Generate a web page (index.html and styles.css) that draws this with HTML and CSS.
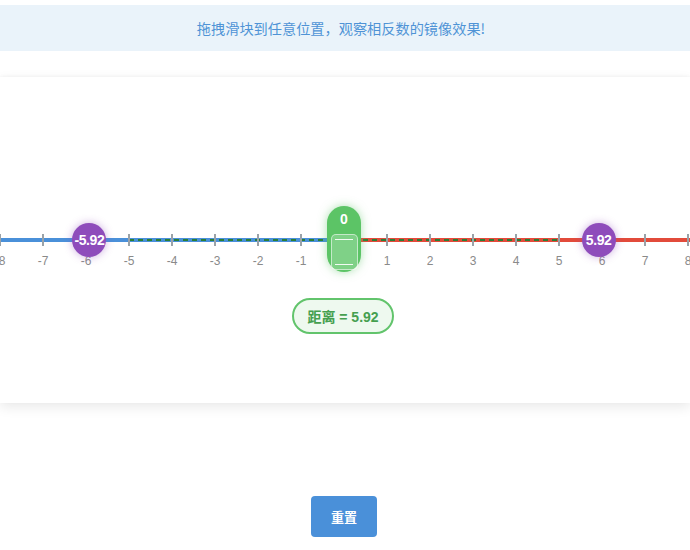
FILE: index.html
```html
<!DOCTYPE html>
<html lang="zh">
<head>
<meta charset="utf-8">
<link rel="stylesheet" href="styles.css">
</head>
<body>
<div class="page">
  <div class="info">拖拽滑块到任意位置，观察相反数的镜像效果!</div>
  <div class="card">
    <div class="axis">
      <div class="line line-neg"></div>
      <div class="line line-pos"></div>
      <div class="dash" style="left:calc(50% - 1px - 215px);width:430px"></div>
      <div class="tick" style="left:calc(50% - 1px - 344px)"><span>-8</span></div>
      <div class="tick" style="left:calc(50% - 1px - 301px)"><span>-7</span></div>
      <div class="tick" style="left:calc(50% - 1px - 258px)"><span>-6</span></div>
      <div class="tick" style="left:calc(50% - 1px - 215px)"><span>-5</span></div>
      <div class="tick" style="left:calc(50% - 1px - 172px)"><span>-4</span></div>
      <div class="tick" style="left:calc(50% - 1px - 129px)"><span>-3</span></div>
      <div class="tick" style="left:calc(50% - 1px - 86px)"><span>-2</span></div>
      <div class="tick" style="left:calc(50% - 1px - 43px)"><span>-1</span></div>
      <div class="tick" style="left:calc(50% - 1px + 43px)"><span>1</span></div>
      <div class="tick" style="left:calc(50% - 1px + 86px)"><span>2</span></div>
      <div class="tick" style="left:calc(50% - 1px + 129px)"><span>3</span></div>
      <div class="tick" style="left:calc(50% - 1px + 172px)"><span>4</span></div>
      <div class="tick" style="left:calc(50% - 1px + 215px)"><span>5</span></div>
      <div class="tick" style="left:calc(50% - 1px + 258px)"><span>6</span></div>
      <div class="tick" style="left:calc(50% - 1px + 301px)"><span>7</span></div>
      <div class="tick" style="left:calc(50% - 1px + 344px)"><span>8</span></div>
      <div class="point" style="left:calc(50% - 1px - 254.6px)">-5.92</div>
      <div class="point" style="left:calc(50% - 1px + 254.6px)">5.92</div>
      <div class="handle" style="left:calc(50% - 1px)">
        <span class="handle-val">0</span>
        <div class="grip"><i></i><i></i></div>
      </div>
    </div>
    <div class="distance">距离 = 5.92</div>
  </div>
  <div class="actions">
    <button class="reset">重置</button>
  </div>
</div>
</body>
</html>
```

FILE: styles.css
```css
html, body {
  margin: 0;
  padding: 0;
  background: #ffffff;
  overflow: hidden;
}
body {
  font-family: "Liberation Sans", Arial, "Noto Sans CJK SC", sans-serif;
}
.page {
  padding-top: 5px;
}
.info {
  height: 46px;
  display: flex;
  align-items: center;
  justify-content: center;
  background: #eaf3fa;
  color: #4f93d6;
  font-size: 14.2px;
  font-family: "Noto Sans CJK SC", sans-serif;
  padding-right: 8px;
}
.card {
  margin-top: 26px;
  height: 326px;
  box-sizing: border-box;
  padding-top: 133px;
  background: #fff;
  box-shadow: 0 4px 12px rgba(0, 0, 0, 0.09), 0 -1px 3px rgba(0, 0, 0, 0.03);
  display: flex;
  flex-direction: column;
  align-items: center;
}
.axis {
  position: relative;
  width: 100%;
  height: 60px;
}
.line {
  position: absolute;
  top: 28px;
  height: 4px;
}
.line-neg {
  left: 0;
  width: calc(50% - 1px);
  background: #4a90d9;
}
.line-pos {
  left: calc(50% - 1px);
  right: 0;
  background: #e24b3b;
}
.dash {
  position: absolute;
  top: 29px;
  height: 2px;
  background: repeating-linear-gradient(90deg, #2a7f36 0 5px, transparent 5px 9px);
}
.tick {
  position: absolute;
  top: 24px;
  width: 2px;
  height: 12px;
  margin-left: -1px;
  background: #9aa2a8;
}
.tick span {
  position: absolute;
  top: 20px;
  left: 1px;
  transform: translateX(-50%);
  font-size: 12px;
  color: #8a8a8a;
  white-space: nowrap;
}
.point {
  position: absolute;
  top: 13px;
  width: 34px;
  height: 34px;
  margin-left: -17px;
  border-radius: 50%;
  background: #8e4cbb;
  color: #fff;
  font-weight: bold;
  font-size: 14px;
  display: flex;
  align-items: center;
  justify-content: center;
  box-shadow: 0 0 8px rgba(142, 76, 187, 0.45);
  letter-spacing: -0.4px;
  white-space: nowrap;
}
.handle {
  position: absolute;
  top: -4px;
  width: 34px;
  height: 66px;
  margin-left: -17px;
  border-radius: 17px;
  background: #5cc466;
  box-shadow: 0 0 10px rgba(92, 196, 102, 0.5);
  display: flex;
  flex-direction: column;
  align-items: center;
}
.handle-val {
  margin-top: 5px;
  color: #fff;
  font-weight: bold;
  font-size: 14px;
  line-height: 16px;
}
.grip {
  margin-top: 7px;
  width: 27px;
  height: 36px;
  box-sizing: border-box;
  border: 1px solid rgba(255, 255, 255, 0.55);
  border-radius: 5px;
  background: rgba(255, 255, 255, 0.22);
  display: flex;
  flex-direction: column;
  justify-content: space-between;
  align-items: center;
  padding: 4px 0;
}
.grip i {
  display: block;
  width: 18px;
  height: 1px;
  background: rgba(255, 255, 255, 0.9);
}
.distance {
  margin-top: 28px;
  height: 36px;
  box-sizing: border-box;
  padding: 0 13px;
  border: 2px solid #62c46c;
  border-radius: 18px;
  background: #eef9ef;
  color: #45a04f;
  font-weight: bold;
  font-size: 14px;
  display: flex;
  align-items: center;
  margin-left: -4px;
}
.actions {
  display: flex;
  justify-content: center;
  margin-top: 93px;
}
.reset {
  width: 66px;
  height: 41px;
  border: none;
  border-radius: 4px;
  background: #4a90d9;
  color: #fff;
  font-weight: bold;
  font-size: 13px;
  font-family: "Noto Sans CJK SC", sans-serif;
  padding: 0;
  margin-left: -2px;
}
```
